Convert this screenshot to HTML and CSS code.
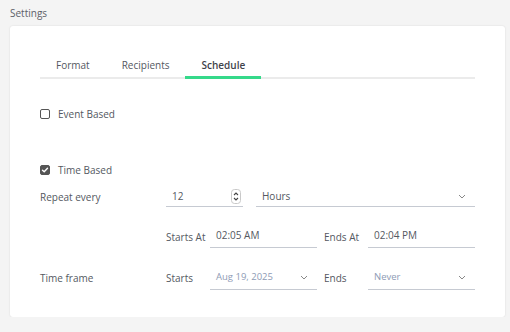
FILE: index.html
```html
<!DOCTYPE html>
<html lang="en">
<head>
    <meta charset="UTF-8">
    <meta name="viewport" content="width=device-width, initial-scale=1.0">
    <title>Settings</title>
    <link rel="stylesheet" href="styles.css">
</head>
<body>

    <div class="page-title">Settings</div>

    <div class="card">
        <!-- tabs -->
        <ul class="tabs">
            <li>Format</li>
            <li>Recipients</li>
            <li class="active">Schedule</li>
        </ul>

        <div class="check-row event-row">
            <span class="box"></span>
            <span>Event Based</span>
        </div>

        <div class="check-row time-row">
            <span class="box checked">
                <svg width="8" height="8" viewBox="0 0 8 8"><path d="M1.5 4.2 L3.2 5.8 L6.5 2.3" fill="none" stroke="#fff" stroke-width="1.4" stroke-linecap="round" stroke-linejoin="round"/></svg>
            </span>
            <span>Time Based</span>
        </div>

        <div class="row repeat">
            <div class="label">Repeat every</div>
            <div class="field num">
                <span>12</span>
                <svg class="spin" width="10" height="15" viewBox="0 0 10 15">
                    <rect x="0.5" y="0.5" width="9" height="14" rx="3" fill="#fff" stroke="#c9c9c9"/>
                    <path d="M3 6 L5 4 L7 6" fill="none" stroke="#444" stroke-width="1.1"/>
                    <path d="M3 9 L5 11 L7 9" fill="none" stroke="#444" stroke-width="1.1"/>
                </svg>
            </div>
            <div class="field unit">
                <span>Hours</span>
                <svg class="chev" width="8" height="5" viewBox="0 0 8 5"><path d="M1 1 L4 4 L7 1" fill="none" stroke="#888" stroke-width="1"/></svg>
            </div>
        </div>

        <div class="row times">
            <div class="label"></div>
            <div class="sub">Starts At</div>
            <div class="field half"><span>02:05 AM</span></div>
            <div class="sub ends">Ends At</div>
            <div class="field half"><span>02:04 PM</span></div>
        </div>

        <div class="row frame">
            <div class="label">Time frame</div>
            <div class="sub">Starts</div>
            <div class="field half muted">
                <span>Aug 19, 2025</span>
                <svg class="chev" width="8" height="5" viewBox="0 0 8 5"><path d="M1 1 L4 4 L7 1" fill="none" stroke="#888" stroke-width="1"/></svg>
            </div>
            <div class="sub ends">Ends</div>
            <div class="field half muted">
                <span>Never</span>
                <svg class="chev" width="8" height="5" viewBox="0 0 8 5"><path d="M1 1 L4 4 L7 1" fill="none" stroke="#888" stroke-width="1"/></svg>
            </div>
        </div>
    </div>

</body>
</html>
```

FILE: styles.css
```css
body { margin: 0; padding: 5px 5px 0 10px; background: #f4f4f4; font-family: "Open Sans", Arial, sans-serif; font-size: 10px; line-height: 16px; color: #545861; }

.page-title { height: 16px; margin-bottom: 5px; color: #5d6068; }

.card { background: #fff; border-radius: 3px; box-shadow: 0 0 2px rgba(0,0,0,0.12); padding: 30px 30px 27px 30px; }

/* tabs */
.tabs { list-style: none; margin: 0; padding: 0; display: flex; border-bottom: 2px solid #ebebeb; }
.tabs li { padding: 1px 16px 3px 16px; border-bottom: 3px solid transparent; margin-bottom: -2px; }
.tabs li.active { border-bottom-color: #35d98a; font-weight: 600; color: #3f434b; }

/* checkboxes */
.check-row { display: flex; align-items: center; gap: 8px; height: 14px; }
.event-row { margin-top: 28px; }
.time-row { margin-top: 42px; }
.box { width: 8px; height: 8px; border: 1.3px solid #555; border-radius: 2px; display: flex; align-items: center; justify-content: center; }
.box.checked { background: #555; }

/* form rows */
.row { display: flex; align-items: center; }
.repeat { margin-top: 9px; }
.times { margin-top: 20px; }
.frame { margin-top: 21px; }
.label { width: 126px; flex: none; }
.sub { width: 44px; flex: none; }
.sub.ends { width: 44px; padding-left: 7px; }
.field { height: 21px; border-bottom: 1px solid #c6cad2; display: flex; align-items: center; justify-content: space-between; padding: 0 7px 0 6px; box-sizing: border-box; flex: none; }
.field.num { width: 77px; padding-right: 2px; }
.field.unit { width: 219px; margin-left: 13px; padding-right: 9px; }
.field.half { width: 107px; padding-right: 9px; }
.field.muted { color: #8e9bb5; font-size: 9.5px; }
.times .field { padding-bottom: 4px; }
.times .sub { padding-bottom: 2px; }
.frame .field { padding-bottom: 4px; }
.frame .label, .frame .sub { padding-bottom: 4px; }
.chev { margin-top: 1px; }
```
